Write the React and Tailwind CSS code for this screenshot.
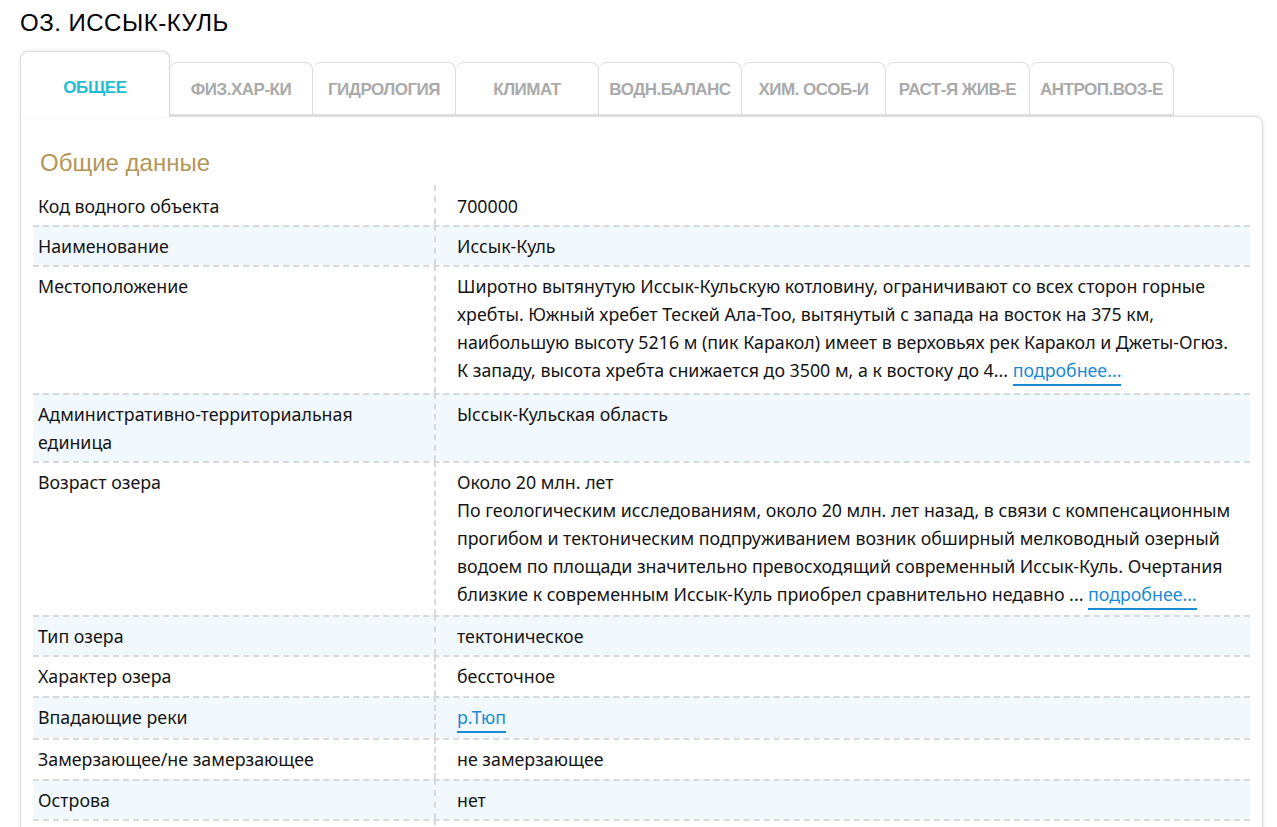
const tabs = [
  "ФИЗ.ХАР-КИ",
  "ГИДРОЛОГИЯ",
  "КЛИМАТ",
  "ВОДН.БАЛАНС",
  "ХИМ. ОСОБ-И",
  "РАСТ-Я ЖИВ-Е",
  "АНТРОП.ВОЗ-Е",
];

function More({ children }) {
  return (
    <a href="#" className="inline-block leading-[27px] text-[#1a8ad4] border-b-2 border-[#1a8ad4]">
      {children}
    </a>
  );
}

const rows = [
  { label: ["Код водного объекта"], value: ["700000"] },
  { label: ["Наименование"], value: ["Иссык-Куль"] },
  {
    label: ["Местоположение"],
    pb: "pb-[7px]",
    value: [
      "Широтно вытянутую Иссык-Кульскую котловину, ограничивают со всех сторон горные",
      "хребты. Южный хребет Тескей Ала-Тоо, вытянутый с запада на восток на 375 км,",
      "наибольшую высоту 5216 м (пик Каракол) имеет в верховьях рек Каракол и Джеты-Огюз.",
      <>
        К западу, высота хребта снижается до 3500 м, а к востоку до 4... <More>подробнее...</More>
      </>,
    ],
  },
  {
    label: ["Административно-территориальная", "единица"],
    value: ["Ысcык-Кульская область"],
  },
  {
    label: ["Возраст озера"],
    value: [
      "Около 20 млн. лет",
      "По геологическим исследованиям, около 20 млн. лет назад, в связи с компенсационным",
      "прогибом и тектоническим подпруживанием возник обширный мелководный озерный",
      "водоем по площади значительно превосходящий современный Иссык-Куль. Очертания",
      <>
        близкие к современным Иссык-Куль приобрел сравнительно недавно ... <More>подробнее...</More>
      </>,
    ],
  },
  { label: ["Тип озера"], value: ["тектоническое"] },
  { label: ["Характер озера"], value: ["бессточное"], pb: "pb-[6px]" },
  { label: ["Впадающие реки"], value: [<More>р.Тюп</More>] },
  { label: ["Замерзающее/не замерзающее"], value: ["не замерзающее"], pb: "pb-[6px]" },
  { label: ["Острова"], value: ["нет"] },
  { label: [""], value: [""] },
];

export default function App() {
  return (
    <div className="h-screen overflow-hidden bg-white px-5 pt-[7px] text-[#151515]" style={{ fontFamily: "'Noto Sans', sans-serif" }}>
      <h1 className="text-[24px] leading-[32px] text-[#000] tracking-[0.5px]" style={{ fontFamily: "'Liberation Sans', Arial, sans-serif" }}>
        ОЗ. ИССЫК-КУЛЬ
      </h1>

      <div className="mt-[12px] flex items-end" style={{ fontFamily: "'Liberation Sans', Arial, sans-serif" }}>
        <div className="relative z-10 w-[150px] h-[66px] -mb-[1px] bg-white border border-[#ddd] border-b-0 rounded-t-[8px] shadow-[0_-1px_4px_rgba(0,0,0,0.08)] flex justify-center pt-[23px]">
          <span className="text-[17px] font-bold text-[#1ebdd5] tracking-[-0.4px]">ОБЩЕЕ</span>
        </div>
        {tabs.map((t, i) => (
          <div
            key={t}
            className={`${i >= 4 ? "w-[144px]" : "w-[143px]"} h-[54px] bg-white border border-[#ddd] border-l-0 border-b-2 rounded-t-[8px] flex items-center justify-center pt-[2px]`}
          >
            <span className="text-[17px] font-bold text-[#aaa] tracking-[-0.5px]">{t}</span>
          </div>
        ))}
      </div>

      <div className="w-[1243px] bg-white border border-[#ddd] rounded-b-[8px] rounded-tr-[8px] shadow-[0_0_5px_rgba(0,0,0,0.1)] px-[12px] pt-[31px]">
        <h2 className="px-[7px] text-[24px] leading-[30px] text-[#b39656]" style={{ fontFamily: "'Liberation Sans', Arial, sans-serif" }}>
          Общие данные
        </h2>
        <div className="mt-[7px] text-[17.8px] leading-[28px]">
          {rows.map((r, i) => (
            <div
              key={i}
              className={`flex border-t-2 border-dashed ${i > 0 ? "border-[#d9d9d9]" : "border-transparent"} ${i % 2 === 1 ? "bg-[#f2f9fe]" : "bg-white"}`}
            >
              <div className="w-[401px] shrink-0 pl-[5px] py-[5px] min-h-[38px]">
                {r.label.map((l, k) => (
                  <div key={k}>{l}</div>
                ))}
              </div>
              <div
                className={`flex-1 border-l-2 border-dashed border-[#d9d9d9] -mt-[2px] pt-[7px] pl-[21px] ${r.pb || "pb-[5px]"} whitespace-nowrap`}
              >
                {r.value.map((v, k) => (
                  <div key={k}>{v}</div>
                ))}
              </div>
            </div>
          ))}
        </div>
      </div>
    </div>
  );
}
